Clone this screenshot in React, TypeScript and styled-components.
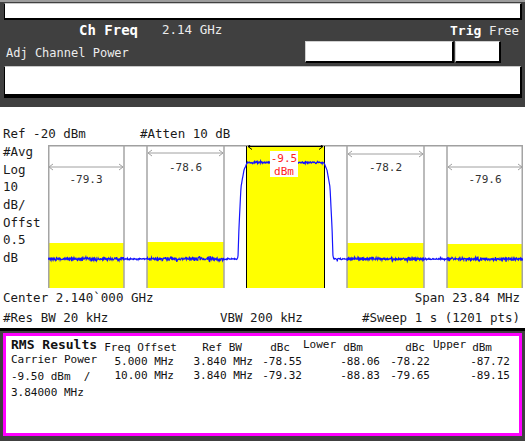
import React from 'react';
import styled, { createGlobalStyle } from 'styled-components';

const MONO = `"DejaVu Sans Mono", "Liberation Mono", monospace`;

const GlobalStyle = createGlobalStyle`
  html, body { margin: 0; padding: 0; background: #ffffff; }
  body { width: 525px; height: 441px; overflow: hidden; font-family: ${MONO}; }
  * { box-sizing: border-box; }
`;

const Screen = styled.div`
  width: 525px;
  height: 441px;
  display: flex;
  flex-direction: column;
  background: #fff;
`;

/* ---------- header ---------- */
const Header = styled.header`
  height: 107px;
  background: #404040;
  border-top: 2px solid #9c9c9c;
  padding: 1px 3px 0 4px;
  display: flex;
  flex-direction: column;
  color: #ececec;
`;

const EntryBar = styled.div<{ $h: number; $bottom: number }>`
  height: ${(p) => p.$h}px;
  background: #fff;
  border-top: 1px solid #c8c8c8;
  border-left: 1px solid #000;
  border-right: 2px solid #000;
  border-bottom: ${(p) => p.$bottom}px solid #000;
`;

const TitleRow = styled.div`
  height: 20px;
  display: flex;
  align-items: center;
  justify-content: space-between;
  padding: 0 3px 0 75px;
  line-height: 20px;
`;

const TitleGroup = styled.div`
  display: flex;
  gap: 24px;
`;

const Strong = styled.span<{ $size: number }>`
  font-weight: bold;
  font-size: ${(p) => p.$size}px;
  color: #fff;
`;

const Plain = styled.span<{ $size: number }>`
  font-size: ${(p) => p.$size}px;
  white-space: pre;
`;

const ModeRow = styled.div`
  height: 26px;
  display: flex;
  align-items: flex-start;
  justify-content: space-between;
  padding: 1px 21px 0 2px;
  line-height: 24px;
`;

const Fields = styled.div`
  display: flex;
  gap: 1px;
`;

const Field = styled.div<{ $w: number }>`
  width: ${(p) => p.$w}px;
  height: 22px;
  background: #fff;
  border-top: 1px solid #d0d0d0;
  border-left: 1px solid #d0d0d0;
  border-right: 2px solid #000;
  border-bottom: 2px solid #000;
`;

/* ---------- graph ---------- */
const Graph = styled.section`
  height: 221px;
  display: flex;
  flex-direction: column;
  font-size: 12.5px;
  color: #1a1a1a;
`;

const ScaleRow = styled.div`
  display: flex;
  padding: 18px 3px 3px;
  line-height: 17px;
  height: 38px;
`;

const Cell = styled.span<{ $w?: number }>`
  white-space: pre;
  ${(p) => (p.$w ? `width: ${p.$w}px;` : '')}
`;

const ChartRow = styled.div`
  height: 143px;
  display: flex;
`;

const ScaleLabels = styled.div`
  width: 48px;
  padding-left: 3px;
  margin-top: -2px;
  display: flex;
  flex-direction: column;
  line-height: 17.67px;
`;

const Plot = styled.svg`
  display: block;
  width: 475px;
  height: 143px;
`;

const InfoRow = styled.div`
  height: 20px;
  line-height: 20px;
  padding: 0 5px 0 3px;
  display: flex;
  justify-content: space-between;
`;

const InfoGrid = styled.div`
  height: 20px;
  line-height: 20px;
  padding: 0 5px 0 3px;
  display: grid;
  grid-template-columns: 217px 1fr auto;
`;

/* ---------- results ---------- */
const Results = styled.section`
  flex: 1;
  background: #404040;
  border-top: 3px solid #000;
  padding: 2px 3px 5px;
  display: flex;
`;

const ResultsBox = styled.div`
  flex: 1;
  border: 3px solid #ff00ff;
  background: #fff;
  display: flex;
  padding-left: 5px;
  font-size: 11px;
  color: #111;
`;

const LabelColumn = styled.div`
  width: 89px;
  display: flex;
  flex-direction: column;
  padding-top: 2px;
`;

const ResultsTitle = styled.div`
  font-weight: bold;
  font-size: 13px;
  line-height: 14px;
  white-space: nowrap;
`;

const LabelLine = styled.div`
  line-height: 16.5px;
  white-space: pre;
`;

const Table = styled.div`
  padding-top: 5px;
  display: grid;
  grid-template-columns: 78px 76px 49px 78px 50px 80px;
  grid-auto-rows: 14px;
  line-height: 14px;
`;

const HeadCell = styled.div<{ $pr: number; $split?: boolean }>`
  display: flex;
  justify-content: ${(p) => (p.$split ? 'space-between' : 'flex-end')};
  padding-right: ${(p) => p.$pr}px;
  white-space: pre;
`;

const Raised = styled.span<{ $pl?: number }>`
  transform: translateY(-3px);
  padding-left: ${(p) => p.$pl || 0}px;
`;

const ValueCell = styled.div<{ $pr: number }>`
  text-align: right;
  padding-right: ${(p) => p.$pr}px;
  white-space: pre;
`;

/* ---------- chart data ---------- */
const PX = 48;
const PY = 145;

const sideChannels = [
  { x0: 0, x1: 76, yTop: 98, arrowY: 22, labelY: 38, label: '-79.3' },
  { x0: 99, x1: 176, yTop: 97, arrowY: 8, labelY: 26, label: '-78.6' },
  { x0: 299, x1: 376, yTop: 98, arrowY: 9, labelY: 26, label: '-78.2' },
  { x0: 399, x1: 475, yTop: 99, arrowY: 22, labelY: 38, label: '-79.6' },
];

const MAIN = { x0: 199, x1: 276 };

function makeTrace(): string {
  let s = 20240611;
  const rnd = () => {
    s = (s * 16807) % 2147483647;
    return s / 2147483647;
  };
  const prof: [number, number][] = [
    [38, 162.5],
    [38.5, 163],
    [41.5, 170],
    [44.5, 187],
    [46.5, 227],
    [47.5, 257],
    [48.5, 259],
  ];
  const inSide = (x: number) => sideChannels.some((c) => x >= c.x0 && x <= c.x1);
  const pts: string[] = [];
  const N = 1201;
  for (let i = 0; i < N; i++) {
    const x = (i * 474.5) / (N - 1) + 0.25;
    const d = Math.abs(x + PX - 285.5);
    let y = 259;
    if (d <= 38) y = 162.5;
    else if (d < 48.5) {
      for (let k = 0; k < prof.length - 1; k++) {
        const [d0, y0] = prof[k];
        const [d1, y1] = prof[k + 1];
        if (d >= d0 && d <= d1) {
          y = y0 + ((y1 - y0) * (d - d0)) / (d1 - d0);
          break;
        }
      }
    }
    const g = rnd() + rnd() + rnd() - 1.5;
    let n: number;
    if (d >= 48.5) {
      const amp = inSide(x) ? 1.7 : 0.8;
      n = g * amp + (rnd() < 0.05 ? (rnd() - 0.5) * 5 : 0);
    } else if (d <= 38) {
      n = g * 1.0 + (rnd() < 0.04 ? (rnd() - 0.5) * 3 : 0);
    } else n = g * 0.4;
    pts.push(`${x.toFixed(2)},${(y - PY + n).toFixed(2)}`);
  }
  return pts.join(' ');
}

const TRACE = makeTrace();

const Arrow: React.FC<{ x0: number; x1: number; y: number; color: string }> = ({ x0, x1, y, color }) => (
  <g stroke={color} strokeWidth={1} fill="none">
    <line x1={x0 + 1} y1={y} x2={x1 - 1} y2={y} />
    <polyline points={`${x0 + 5},${y - 3} ${x0 + 1},${y} ${x0 + 5},${y + 3}`} />
    <polyline points={`${x1 - 5},${y - 3} ${x1 - 1},${y} ${x1 - 5},${y + 3}`} />
  </g>
);

const Spectrum: React.FC = () => (
  <Plot viewBox="0 0 475 143">
    <rect x={0} y={0} width={475} height={143} fill="#fff" />
    {sideChannels.map((c) => (
      <rect key={'y' + c.x0} x={c.x0} y={c.yTop} width={c.x1 - c.x0} height={143 - c.yTop} fill="#ffff00" />
    ))}
    <rect x={MAIN.x0} y={1.5} width={MAIN.x1 - MAIN.x0} height={142} fill="#ffff00" />
    <line x1={0} y1={0.75} x2={475} y2={0.75} stroke="#a0a0a0" strokeWidth={1.5} />
    {sideChannels.map((c) => (
      <g key={'l' + c.x0} stroke="#a4a4a4" strokeWidth={1.5}>
        <line x1={Math.max(c.x0, 0.75)} y1={0} x2={Math.max(c.x0, 0.75)} y2={143} />
        <line x1={Math.min(c.x1, 474.25)} y1={0} x2={Math.min(c.x1, 474.25)} y2={143} />
      </g>
    ))}
    <g stroke="#000" strokeWidth={1}>
      <line x1={MAIN.x0 - 0.5} y1={1} x2={MAIN.x0 - 0.5} y2={143} />
      <line x1={MAIN.x1 + 0.5} y1={1} x2={MAIN.x1 + 0.5} y2={143} />
    </g>
    <Arrow x0={MAIN.x0} x1={MAIN.x1} y={1.5} color="#000" />
    {sideChannels.map((c) => (
      <Arrow key={'a' + c.x0} x0={c.x0} x1={c.x1} y={c.arrowY} color="#a0a0a0" />
    ))}
    <g fontFamily={MONO} fontSize={11} fill="#333" textAnchor="middle">
      {sideChannels.map((c) => (
        <text key={'t' + c.x0} x={(c.x0 + c.x1) / 2} y={c.labelY}>
          {c.label}
        </text>
      ))}
    </g>
    <polyline points={TRACE} fill="none" stroke="#1414ff" strokeWidth={1.2} />
    <rect x={222} y={6} width={28} height={26} fill="#fff" />
    <g fontFamily={MONO} fontSize={11} fill="#ff2020" textAnchor="middle">
      <text x={236} y={16.7}>-9.5</text>
      <text x={236} y={30}>dBm</text>
    </g>
  </Plot>
);

/* ---------- results data ---------- */
const rows = [
  ['5.000 MHz', '3.840 MHz', '-78.55', '-88.06', '-78.22', '-87.72'],
  ['10.00 MHz', '3.840 MHz', '-79.32', '-88.83', '-79.65', '-89.15'],
];
const valuePad = [4, 1, 1, 1, 1, 1];

export default function App() {
  return (
    <>
      <GlobalStyle />
      <Screen>
        <Header>
          <EntryBar $h={17} $bottom={2} />
          <TitleRow>
            <TitleGroup>
              <Strong $size={14}>Ch Freq</Strong>
              <Plain $size={12.5}>2.14 GHz</Plain>
            </TitleGroup>
            <span>
              <Strong $size={13}>Trig</Strong>
              <Plain $size={12.5}> Free</Plain>
            </span>
          </TitleRow>
          <ModeRow>
            <Plain $size={12}>Adj Channel Power</Plain>
            <Fields>
              <Field $w={149} />
              <Field $w={46} />
            </Fields>
          </ModeRow>
          <EntryBar $h={32} $bottom={4} />
        </Header>

        <Graph>
          <ScaleRow>
            <Cell $w={137}>Ref -20 dBm</Cell>
            <Cell>#Atten 10 dB</Cell>
          </ScaleRow>
          <ChartRow>
            <ScaleLabels>
              <Cell>#Avg</Cell>
              <Cell>Log</Cell>
              <Cell>10</Cell>
              <Cell>dB/</Cell>
              <Cell>Offst</Cell>
              <Cell>0.5</Cell>
              <Cell>dB</Cell>
            </ScaleLabels>
            <Spectrum />
          </ChartRow>
          <InfoRow>
            <Cell>Center 2.140`000 GHz</Cell>
            <Cell>Span 23.84 MHz</Cell>
          </InfoRow>
          <InfoGrid>
            <Cell>#Res BW 20 kHz</Cell>
            <Cell>VBW 200 kHz</Cell>
            <Cell>#Sweep 1 s (1201 pts)</Cell>
          </InfoGrid>
        </Graph>

        <Results>
          <ResultsBox>
            <LabelColumn>
              <ResultsTitle>RMS Results</ResultsTitle>
              <LabelLine>Carrier Power</LabelLine>
              <LabelLine>-9.50 dBm  /</LabelLine>
              <LabelLine>3.84000 MHz</LabelLine>
            </LabelColumn>
            <Table>
              <HeadCell $pr={1}>Freq Offset</HeadCell>
              <HeadCell $pr={12}>Ref BW</HeadCell>
              <HeadCell $pr={13}>dBc</HeadCell>
              <HeadCell $pr={18} $split>
                <Raised>Lower</Raised>
                <span>dBm</span>
              </HeadCell>
              <HeadCell $pr={6}>dBc</HeadCell>
              <HeadCell $pr={19} $split>
                <Raised $pl={2}>Upper</Raised>
                <span>dBm</span>
              </HeadCell>
              {rows.map((r, ri) =>
                r.map((v, ci) => (
                  <ValueCell key={`${ri}-${ci}`} $pr={valuePad[ci]}>
                    {v}
                  </ValueCell>
                ))
              )}
            </Table>
          </ResultsBox>
        </Results>
      </Screen>
    </>
  );
}
